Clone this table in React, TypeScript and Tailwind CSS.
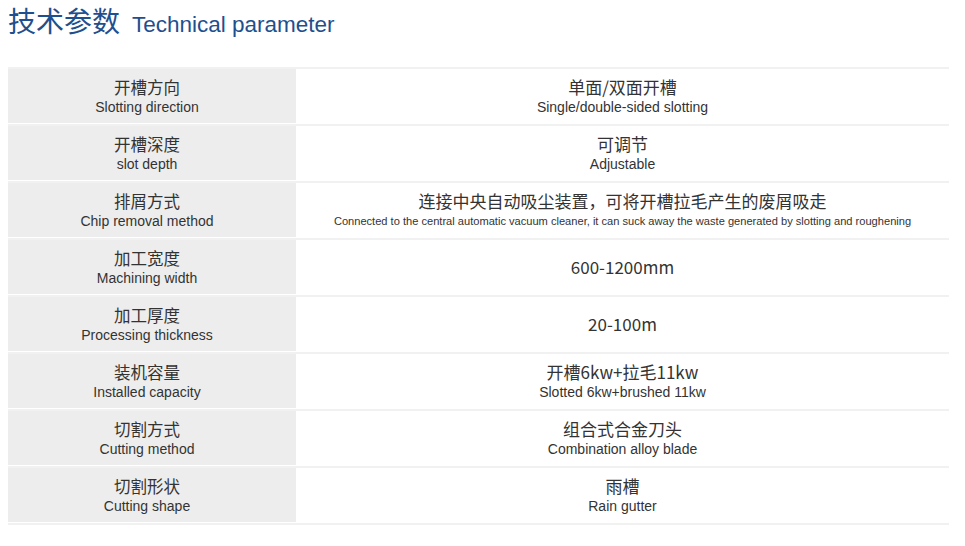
import React from 'react'

const rows: { label: string; labelEn: string; value: string; valueEn?: string; small?: boolean }[] = [
  { label: '开槽方向', labelEn: 'Slotting direction', value: '单面/双面开槽', valueEn: 'Single/double-sided slotting' },
  { label: '开槽深度', labelEn: 'slot depth', value: '可调节', valueEn: 'Adjustable' },
  {
    label: '排屑方式',
    labelEn: 'Chip removal method',
    value: '连接中央自动吸尘装置，可将开槽拉毛产生的废屑吸走',
    valueEn: 'Connected to the central automatic vacuum cleaner, it can suck away the waste generated by slotting and roughening',
    small: true,
  },
  { label: '加工宽度', labelEn: 'Machining width', value: '600-1200mm' },
  { label: '加工厚度', labelEn: 'Processing thickness', value: '20-100m' },
  { label: '装机容量', labelEn: 'Installed capacity', value: '开槽6kw+拉毛11kw', valueEn: 'Slotted 6kw+brushed 11kw' },
  { label: '切割方式', labelEn: 'Cutting method', value: '组合式合金刀头', valueEn: 'Combination alloy blade' },
  { label: '切割形状', labelEn: 'Cutting shape', value: '雨槽', valueEn: 'Rain gutter' },
]

const cn = { fontFamily: '"Noto Sans CJK SC", "Liberation Sans", sans-serif' }
const en = { fontFamily: '"Liberation Sans", Arial, sans-serif' }

export default function App() {
  return (
    <div className="w-[965px] h-[546px] bg-white overflow-hidden">
      <div className="flex items-baseline pl-2 text-[#1e4f8e] h-[41px]">
        <span className="text-[28px] leading-[41px]" style={cn}>技术参数</span>
        <span className="text-[22.5px] leading-[30px] ml-[12px]" style={en}>Technical parameter</span>
      </div>
      <div className="mt-[26px] ml-2 w-[941px]">
        {rows.map((r) => (
          <div key={r.label} className="border-t-2 border-[#f1f1f1] pb-px flex h-[57px]">
            <div className="w-[288px] bg-[#ededed] flex flex-col items-center pt-[7px] pr-[10px] text-[#333]">
              <div className="text-[16.5px] leading-[22px]" style={cn}>{r.label}</div>
              <div className="text-[14px] leading-[18px]" style={en}>{r.labelEn}</div>
            </div>
            <div className="flex-1 flex flex-col items-center justify-center text-[#333]">
              <div className="text-[17px] leading-[22px]" style={cn}>{r.value}</div>
              {r.valueEn && (
                <div className={r.small ? 'text-[11.1px] leading-[18px]' : 'text-[14px] leading-[18px]'} style={en}>
                  {r.valueEn}
                </div>
              )}
            </div>
          </div>
        ))}
        <div className="border-t-2 border-[#f1f1f1]" />
      </div>
    </div>
  )
}
